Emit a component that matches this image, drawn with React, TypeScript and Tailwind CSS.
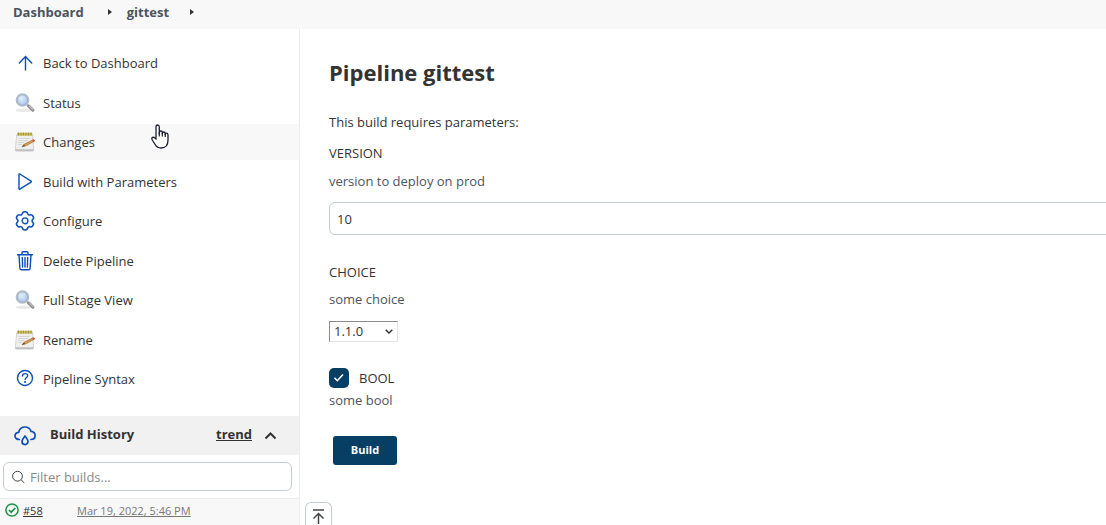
import type { ReactNode } from "react";

function ArrowUp() {
  return (
    <svg viewBox="0 0 20 20" className="size-5" fill="none" stroke="#0b4fb8" strokeWidth="1.4" strokeLinecap="round" strokeLinejoin="round">
      <path d="M10.500 17V3.500M4.300 10L10.500 3.500l6.200 6.500" />
    </svg>
  );
}

function Magnifier() {
  return (
    <svg viewBox="0 0 20 20" className="size-5">
      <defs>
        <radialGradient id="lens" cx="0.4" cy="0.35" r="0.7">
          <stop offset="0" stopColor="#e3effb" />
          <stop offset="1" stopColor="#a3c3ea" />
        </radialGradient>
      </defs>
      <ellipse cx="9" cy="17.2" rx="8.5" ry="1.7" fill="#e9e9e9" />
      <path d="M12 11.5l2 2" stroke="#a8a8a8" strokeWidth="2" />
      <path d="M13.8 13.2l4 4" stroke="#929292" strokeWidth="3.2" strokeLinecap="round" />
      <path d="M14.2 13l3.8 3.6" stroke="#bcbcbc" strokeWidth="1.1" />
      <circle cx="7.500" cy="7" r="6" fill="url(#lens)" stroke="#b9bcc0" strokeWidth="1.7" />
      <circle cx="7.500" cy="7" r="5" fill="none" stroke="#7fa5d6" strokeWidth="0.600" />
    </svg>
  );
}

function Notepad() {
  return (
    <svg viewBox="0 0 20 20" className="size-5">
      <path d="M1.800 2.500h15.900l.8 15.200q0 1.400-1.200 1.400H1.400Q.2 19.100.300 17.700z" fill="#efefed" stroke="#c9c9c6" strokeWidth="0.800" />
      <path d="M.500 17.300h17.800v1.600H.500z" fill="#bcbcb9" />
      <path d="M2 .800h15.200v2.900H2z" fill="#c9ba58" />
      <path d="M3.500.400v3M6 .400v3M8.500 .400v3M11 .400v3M13.500 .400v3M16 .400v3" stroke="#9c8f35" strokeWidth="0.800" />
      <path d="M3.500 6.500h11M3.500 8.500h9.500M3.300 10.500h6M3.200 12.500h4" stroke="#cbcbcb" strokeWidth="0.700" />
      <path d="M7 14.800l2-2.500 9-4.500q1.500-.2 1.700 1.200L11 13.800z" fill="#dc9b45" stroke="#9b6a36" strokeWidth="0.600" />
      <path d="M17.300 8.100l.8 2 1.600-1q.2-1.500-1.200-1.600z" fill="#cd5148" />
      <path d="M7 14.800l2-2.400 1 1.500z" fill="#5b4432" />
    </svg>
  );
}

function Play() {
  return (
    <svg viewBox="0 0 20 20" className="size-5" fill="none" stroke="#0b4fb8" strokeWidth="1.4" strokeLinejoin="round">
      <path d="M4 2.400v14.200q0 .9.800.5l11.300-7q.6-.5 0-1L4.800 2Q4 1.600 4 2.400z" />
    </svg>
  );
}

function Gear() {
  return (
    <svg viewBox="0 0 20 20" className="size-5" fill="none" stroke="#0b4fb8" strokeWidth="1.400" strokeLinejoin="round">
      <path d="M7.700 2.300C8.100.2 11.900.2 12.300 2.300c.2 1.100 1.300 1.700 2.300 1.300 2-.7 3.900 2.500 2.300 3.900-.9.700-.9 2 0 2.700 1.600 1.400-.3 4.700-2.300 4-1-.4-2.100.2-2.300 1.300-.4 2.100-4.200 2.100-4.600 0-.2-1.100-1.300-1.700-2.300-1.300-2 .7-3.900-2.600-2.300-4 .9-.7.900-2 0-2.700-1.600-1.400.3-4.600 2.300-3.900 1 .4 2.100-.2 2.300-1.300z" transform="translate(-1.300 -.1) scale(1.130 1.120)" />
      <circle cx="10" cy="9.800" r="2.900" />
    </svg>
  );
}

function Trash() {
  return (
    <svg viewBox="0 0 20 20" className="size-5" fill="none" stroke="#0b4fb8" strokeWidth="1.400" strokeLinecap="round" strokeLinejoin="round">
      <path d="M2.500 3.700h15M7 3.500V1.800q0-1 1-1h4q1 0 1 1v1.700M4 3.900l.9 13.300q.1 1.600 1.600 1.600h7q1.500 0 1.600-1.600L16 3.900M7.300 6.500l.3 9.500M10 6.500V16M12.700 6.500l-.3 9.500" />
    </svg>
  );
}

function Help() {
  return (
    <svg viewBox="0 0 20 20" className="size-5" fill="none" stroke="#0b4fb8" strokeWidth="1.400" strokeLinecap="round" strokeLinejoin="round">
      <circle cx="10" cy="9" r="7.500" />
      <path d="M7.500 7c0-3.200 5.200-3 5.200-.2 0 1.900-2.600 2-2.600 3.700" />
      <circle cx="10" cy="13" r="0.400" fill="#0b4fb8" />
    </svg>
  );
}

function CloudDrop() {
  return (
    <svg viewBox="0 0 22 20" className="h-5 w-[22px] shrink-0" fill="none" stroke="#0b4fb8" strokeWidth="1.700" strokeLinecap="round" strokeLinejoin="round">
      <path d="M5.300 13.500C2.700 13.500 1 12 1 9.900 1 8 2.500 6.500 4.700 6.300 5.400 3 7.900 1 11 1c3 0 5.200 1.800 5.900 4.300 2.500.3 4.200 2 4.200 4.200 0 2.400-1.700 4-4.200 4" />
      <path d="M11 9.900c-1.700 2.200-3 3.900-3 5.700a3 3 0 0 0 6 0c0-1.800-1.300-3.500-3-5.700z" />
    </svg>
  );
}

function HandCursor() {
  return (
    <svg viewBox="0 0 18 25" className="pointer-events-none absolute left-[151px] top-[124px] h-[25px] w-[18px]" aria-hidden="true">
      <path d="M5 15V3q0-2 1.600-2T8.300 3v7V8.500q0-1.500 1.500-1.500t1.500 1.500v1q0-1.500 1.400-1.500t1.500 1.500v1q0-1.300 1.300-1.300T17 10.800V16q0 8-7 8-4 0-5.800-3.500L1.300 16q-1-2 .3-2.600 1.200-.5 2.200.700z" fill="#fff" stroke="#1c1c30" strokeWidth="1.300" strokeLinejoin="round" />
      <path d="M8.300 8v4.500M11.300 9v3.500M14.200 10v3" stroke="#1c1c30" strokeWidth="1.200" />
    </svg>
  );
}

function Caret() {
  return (
    <svg viewBox="0 0 4 6" className="mb-0.5 h-1.5 w-1" aria-hidden="true">
      <path d="M0 0l4 3-4 3z" fill="#333" />
    </svg>
  );
}

const tasks: { label: string; icon: ReactNode; active?: boolean }[] = [
  { label: "Back to Dashboard", icon: <ArrowUp /> },
  { label: "Status", icon: <Magnifier /> },
  { label: "Changes", icon: <Notepad />, active: true },
  { label: "Build with Parameters", icon: <Play /> },
  { label: "Configure", icon: <Gear /> },
  { label: "Delete Pipeline", icon: <Trash /> },
  { label: "Full Stage View", icon: <Magnifier /> },
  { label: "Rename", icon: <Notepad /> },
  { label: "Pipeline Syntax", icon: <Help /> },
];

function Sidebar() {
  return (
    <aside className="flex w-[300px] shrink-0 flex-col border-r border-[#ececec] pt-4">
      <nav aria-label="Tasks" className="pb-4">
        {tasks.map((t) => (
          <a
            key={t.label}
            href="#"
            className={
              "flex h-9 items-center gap-2 pl-[15px] odd:mb-1 even:mb-[3px] " + (t.active ? "bg-[#f8f8f8]" : "")
            }
          >
            {t.icon}
            <span className="pt-0.5">{t.label}</span>
          </a>
        ))}
      </nav>
      <section aria-label="Build History" className="-mt-px flex grow flex-col">
        <div className="flex h-[39px] items-center bg-[#f1f1f1] pl-3.5 pr-[23px]">
          <CloudDrop />
          <h2 className="ml-3.5 grow pb-0.5 font-bold">Build History</h2>
          <a href="#" className="pb-0.5 font-bold underline">trend</a>
          <button type="button" aria-label="Collapse" className="ml-3">
            <svg viewBox="0 0 12 8" className="h-2 w-3" fill="none" stroke="#333" strokeWidth="2">
              <path d="M1.500 6.500l5-5 5 5" />
            </svg>
          </button>
        </div>
        <div className="mb-[7px] ml-[3px] mr-[7px] mt-[7px] flex h-[29px] items-center gap-1 rounded-md border border-[#c3ccd1] pl-2">
          <svg viewBox="0 0 14 14" className="size-3.5 shrink-0" fill="none" stroke="#444" strokeWidth="1">
            <circle cx="5.500" cy="6.200" r="4.900" />
            <path d="M9 9.700l3.300 3.200" />
          </svg>
          <input
            aria-label="Filter builds"
            placeholder="Filter builds..."
            className="min-w-0 grow bg-transparent pt-0.5 outline-none placeholder:text-[#8b8b8b]"
          />
        </div>
        <div className="flex h-[27px] grow items-start border-t border-[#ececec] bg-[#f8f8f8] pl-[5px] pt-1 text-[11px] leading-4">
          <svg viewBox="0 0 14 14" className="size-3.5" fill="none" stroke="#1d9348" strokeWidth="1.500">
            <circle cx="7" cy="7" r="6.100" />
            <path d="M4 7l2.200 2.200L10.300 5" strokeWidth="1.700" />
          </svg>
          <a href="#" className="ml-1 w-[54px] underline">#58</a>
          <a href="#" className="text-[#777] underline">Mar 19, 2022, 5:46 PM</a>
        </div>
      </section>
    </aside>
  );
}

function ParameterForm() {
  return (
    <main className="relative min-w-0 grow pl-[29px] pt-7">
      <h1 className="text-[22px] font-bold leading-[30px]">Pipeline gittest</h1>
      <form onSubmit={(e) => e.preventDefault()}>
        <p className="mt-[25px] leading-5">This build requires parameters:</p>
        <label htmlFor="version" className="mt-[11px] block leading-5">VERSION</label>
        <p className="mt-2 leading-5 text-[#4d545d]">version to deploy on prod</p>
        <div className="-mr-2 mt-[11px]">
          <input
            id="version"
            defaultValue="10"
            className="block h-[33px] w-full rounded-md border border-[#c3ccd1] px-[7px] outline-none"
          />
        </div>
        <label htmlFor="choice" className="mt-[27px] block leading-5">CHOICE</label>
        <p className="mt-[7px] leading-5 text-[#4d545d]">some choice</p>
        <div className="relative mt-3 h-[21px] w-[69px]">
          <select
            id="choice"
            className="block size-full appearance-none border border-b-[#e3e3e3] border-l-[#8c8c8c] border-r-[#e3e3e3] border-t-[#8c8c8c] bg-white pl-1 leading-[19px] outline-none"
          >
            <option>1.1.0</option>
          </select>
          <svg viewBox="0 0 8 6" className="pointer-events-none absolute right-[5px] top-2 h-1.5 w-2" fill="none" stroke="#333" strokeWidth="1.500">
            <path d="M.7 .7L4 4l3.300-3.300" />
          </svg>
        </div>
        <div className="mt-[26px] flex items-center">
          <span className="relative size-5">
            <input id="bool" type="checkbox" defaultChecked className="block size-5 appearance-none rounded-[5px] bg-[#063f63]" />
            <svg viewBox="0 0 20 20" className="pointer-events-none absolute inset-0 size-5" fill="none" stroke="#fff" strokeWidth="1.600">
              <path d="M5.500 9.800l2.800 2.900L14 6.500" />
            </svg>
          </span>
          <label htmlFor="bool" className="ml-2.5 leading-5">BOOL</label>
        </div>
        <p className="mt-[2px] leading-5 text-[#4d545d]">some bool</p>
        <button type="submit" className="ml-1 mt-[26px] block h-[29px] w-16 rounded-[3px] bg-[#063f63] text-[11px] font-bold text-white">
          Build
        </button>
      </form>
      <button
        type="button"
        aria-label="Back to top"
        className="absolute bottom-0 left-[5px] flex h-[23px] w-[27px] items-center justify-center rounded-t-md border border-b-0 border-[#c3ccd1] bg-white pt-1"
      >
        <svg viewBox="0 0 12 15" className="h-[15px] w-3" fill="none" stroke="#444" strokeWidth="1.500">
          <path d="M0 1h11M5.500 15V4.500M.5 9.500l5-5 5 5" />
        </svg>
      </button>
    </main>
  );
}

export default function App() {
  return (
    <div className="relative flex h-screen flex-col overflow-hidden bg-white font-['Open_Sans','Noto_Sans',sans-serif] text-[13px] text-[#333]">
      <header className="flex h-[29px] items-center bg-[#f8f8f8] pb-1 pl-[13px] font-bold text-[#4d545d]">
        <a href="#">Dashboard</a>
        <span className="ml-6 mr-[15px] flex w-1"><Caret /></span>
        <a href="#">gittest</a>
        <span className="ml-[21px] flex w-1"><Caret /></span>
      </header>
      <div className="flex grow">
        <Sidebar />
        <ParameterForm />
      </div>
      <HandCursor />
    </div>
  );
}
